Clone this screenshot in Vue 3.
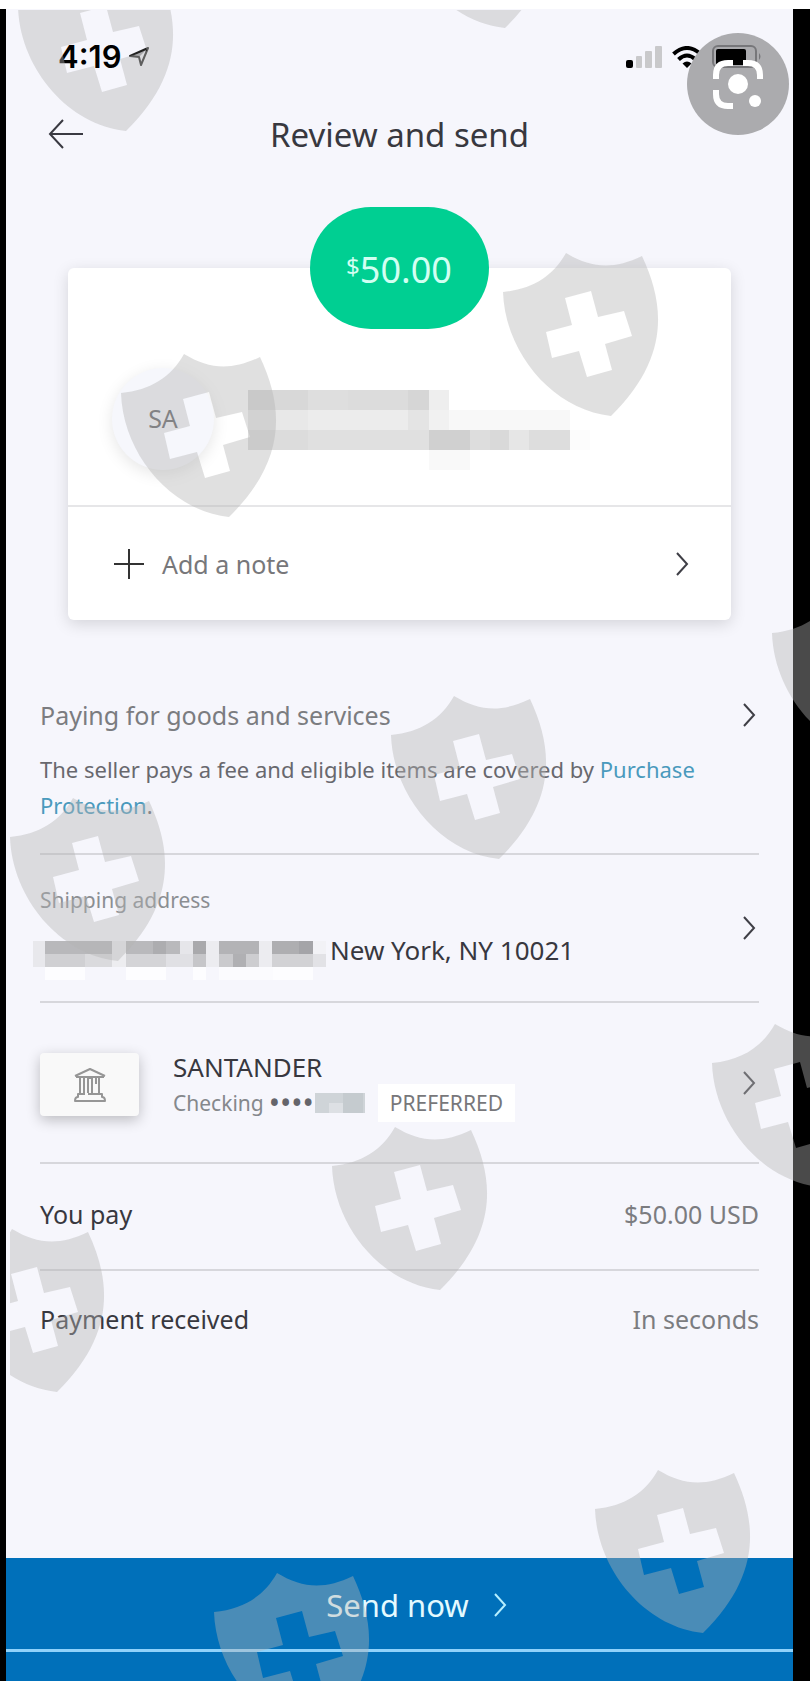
<script setup>
const shields = [
  [18, -32], [397, -135], [503, 253], [121, 354], [772, 594], [391, 696],
  [10, 798], [712, 1024], [332, 1127], [-51, 1229], [595, 1470], [214, 1573]
]

// Blocks hiding the recipient's name: x, y, width, height, colour
const nameBlocks = [
  [0, 0, 60, 20, '#d8d8d8'], [60, 0, 40, 20, '#dedede'], [100, 0, 60, 20, '#dcdcdc'], [160, 0, 21, 20, '#d6d6d6'], [181, 0, 20, 20, '#eeeeee'],
  [0, 20, 60, 20, '#e8e8e8'], [60, 20, 100, 20, '#ececec'], [160, 20, 21, 20, '#e4e4e4'], [181, 20, 20, 20, '#f1f1f1'], [201, 20, 121, 20, '#f8f8f8'],
  [0, 40, 60, 20, '#dcdcdc'], [60, 40, 121, 20, '#e0e0e0'], [181, 40, 41, 20, '#d0d0d0'], [222, 40, 20, 20, '#dddddd'], [242, 40, 19, 20, '#d9d9d9'], [261, 40, 20, 20, '#e6e6e6'], [281, 40, 41, 20, '#dddddd'],
  [181, 60, 41, 20, '#f9f9f9'], [322, 40, 20, 20, '#fcfcfc']
]

const addressBlocks = [
  [0, 0, 12, 26, '#e8e8ec'], [12, 0, 67, 13, '#b8b8bb'], [12, 13, 40, 13, '#d0d0d3'], [52, 13, 27, 13, '#dadadd'],
  [79, 0, 14, 26, '#ededf0'], [93, 0, 54, 13, '#b9b9bc'], [120, 0, 13, 13, '#adadb0'], [93, 13, 40, 13, '#d4d4d7'], [133, 13, 27, 13, '#e0e0e4'],
  [147, 0, 13, 13, '#e6e6ea'], [160, 0, 13, 13, '#a9a9ac'], [160, 13, 13, 13, '#c6c6c9'], [173, 0, 13, 26, '#ececf0'],
  [186, 0, 40, 13, '#b3b3b6'], [186, 13, 14, 13, '#cacacd'], [200, 13, 13, 13, '#b0b0b3'], [213, 13, 13, 13, '#cdcdd0'],
  [226, 0, 13, 26, '#ececf0'], [239, 0, 27, 13, '#aeaeb1'], [266, 0, 14, 13, '#a4a4a8'], [239, 13, 41, 13, '#d2d2d5'], [280, 13, 13, 13, '#e2e2e6'], [280, 0, 13, 13, '#f2f2f6'],
  [12, 26, 40, 13, '#fdfdff'], [93, 26, 40, 13, '#fdfdff'], [160, 26, 13, 13, '#fdfdff'], [186, 26, 54, 13, '#fbfbfe'], [240, 26, 40, 13, '#fdfdff']
]
</script>

<template>
  <div class="device">
    <main class="screen">
      <div class="status">
        <span class="clock">4:19</span>
        <svg class="locate" width="20" height="20" viewBox="0 0 20 20" fill="none" stroke="#222" stroke-width="2" stroke-linejoin="round">
          <path d="M1 9 19 1 12 18 10 10Z" />
          <path d="M1 9 19 1 10 10Z" fill="#222" stroke="none" opacity=".4" />
        </svg>
        <svg class="signal" width="36" height="22" viewBox="0 0 36 22">
          <rect x="0" y="14" width="7" height="8" rx="2" fill="#000" />
          <rect x="10" y="10" width="6" height="12" rx="1" fill="#c9c9cb" />
          <rect x="19" y="5" width="7" height="17" rx="1" fill="#c9c9cb" />
          <rect x="29" y="0" width="7" height="22" rx="1" fill="#c9c9cb" />
        </svg>
        <svg class="wifi" width="30" height="22" viewBox="0 0 30 22" fill="none" stroke="#000" stroke-width="4">
          <path d="M1.500 8Q15 -4 28.500 8M6.500 13.500Q15 5.500 23.500 13.500" />
          <path d="M10.500 17.500Q15 13.500 19.500 17.500L15 22Z" fill="#000" stroke="none" />
        </svg>
        <svg class="battery" width="50" height="24" viewBox="0 0 50 24">
          <rect x="1" y="1" width="43" height="21" rx="5" fill="none" stroke="#77777a" stroke-width="2" />
          <rect x="4" y="4" width="30" height="16" rx="2" fill="#000" />
          <path d="M47 8q3 3.500 0 7z" fill="#77777a" />
        </svg>
        <span class="lens disc"></span>
        <button class="lens" aria-label="Search image">
          <svg width="102" height="102" viewBox="0 0 102 102">
            <g fill="none" stroke="#fff" stroke-width="6">
              <path d="M29 46V42Q29 30 41 30H46M56 30H61Q73 30 73 42V46M29 57V61Q29 73 41 73H46" />
            </g>
            <circle cx="51" cy="51" r="10" fill="#fff" />
            <circle cx="68" cy="68" r="6" fill="#fff" />
          </svg>
        </button>
      </div>

      <header class="header">
        <button class="back" aria-label="Back">
          <svg width="36" height="30" viewBox="0 0 36 30" fill="none" stroke="#3a3a42" stroke-width="2">
            <path d="M35 15H2M15 1 2 15 15 29" />
          </svg>
        </button>
        <h1>Review and send</h1>
      </header>

      <section class="card">
        <div class="amount"><span class="currency">$</span>50.00</div>
        <div class="recipient">
          <div class="avatar">SA</div>
          <svg class="name" width="342" height="80" viewBox="0 0 342 80" aria-hidden="true">
            <rect v-for="(b, i) in nameBlocks" :key="i" :x="b[0]" :y="b[1]" :width="b[2]" :height="b[3]" :fill="b[4]" />
          </svg>
        </div>
        <button class="note">
          <svg width="30" height="30" viewBox="0 0 30 30" stroke="#333" stroke-width="2"><path d="M0 15H30M15 0V30" /></svg>
          <span>Add a note</span>
          <svg class="chevron" width="14" height="24" viewBox="0 0 14 24"><path d="M2 1 12 12 2 23" /></svg>
        </button>
      </section>

      <div class="details">
        <section class="row purpose">
          <div class="purpose-head">
            <h2>Paying for goods and services</h2>
            <svg class="chevron" width="14" height="24" viewBox="0 0 14 24"><path d="M2 1 12 12 2 23" /></svg>
          </div>
          <p>The seller pays a fee and eligible items are covered by <a href="#">Purchase Protection</a>.</p>
        </section>

        <section class="row shipping">
          <div>
            <h3>Shipping address</h3>
            <div class="address">
              <svg class="street" width="293" height="39" viewBox="0 0 293 39" aria-hidden="true">
                <rect v-for="(b, i) in addressBlocks" :key="i" :x="b[0]" :y="b[1]" :width="b[2]" :height="b[3]" :fill="b[4]" />
              </svg>
              <span>New York, NY 10021</span>
            </div>
          </div>
          <svg class="chevron" width="14" height="24" viewBox="0 0 14 24"><path d="M2 1 12 12 2 23" /></svg>
        </section>

        <section class="row bank">
          <div class="tile">
            <svg width="32" height="34" viewBox="0 0 32 34" fill="none" stroke="#969696" stroke-width="2" stroke-linejoin="round">
              <path d="M1 8 16 1 31 8M2 9H30M6 10V25M10 10V25M14 25V10H18V25M25 10V25M22 10V16" />
              <path d="M11 26H4V29Q1 29 1 33H31Q31 29 28 29V26H14" />
            </svg>
          </div>
          <div class="account">
            <div class="bank-name">SANTANDER</div>
            <div class="number">
              <span>Checking</span>
              <span class="dots">••••</span>
              <svg width="50" height="20" viewBox="0 0 50 20" aria-hidden="true">
                <rect width="50" height="20" fill="#cfd4d8" />
                <rect x="14" y="10" width="14" height="10" fill="#dde0e4" />
                <rect x="28" width="20" height="20" fill="#c5cbcf" />
              </svg>
              <span class="badge">PREFERRED</span>
            </div>
          </div>
          <svg class="chevron" width="14" height="24" viewBox="0 0 14 24"><path d="M2 1 12 12 2 23" /></svg>
        </section>

        <section class="row total"><span>You pay</span><span class="value">$50.00 USD</span></section>
        <section class="row total last"><span>Payment received</span><span class="value">In seconds</span></section>
      </div>

      <footer class="footer">
        <button class="send">
          <span>Send now</span>
          <svg width="14" height="24" viewBox="0 0 14 24" fill="none" stroke="#b5efff" stroke-width="2"><path d="M2 1 12 12 2 23" /></svg>
        </button>
      </footer>
    </main>

    <div class="watermark">
      <svg width="100%" height="100%" aria-hidden="true">
        <g transform="translate(-10 -10)" fill="#b3b3b3" fill-opacity=".41" fill-rule="evenodd">
          <path
            v-for="(s, i) in shields" :key="i" :transform="`translate(${s[0]} ${s[1]})`"
            d="M0 39C30 36 50 23 63 0C88 15 110 17 139 3C162 52 167 105 108 163C50 157 2 100 0 39ZM62 45 69 72 43 79 49 105 76 98 84 124 109 117 102 91 129 83 121 58 95 64 88 38Z"
          />
        </g>
      </svg>
    </div>
  </div>
</template>

<style>
body { margin: 0; background: #000; }
</style>

<style scoped>
* { box-sizing: border-box; }
button { border: 0; padding: 0; background: none; font: inherit; color: inherit; }
h1, h2, h3, p { margin: 0; font-weight: 400; }
svg { display: block; flex: none; }

.device {
  position: relative;
  display: flex;
  min-height: 100vh;
  padding: 0 17px 0 6px;
  border-top: 9px solid #fff;
  background: #000;
  font-family: "Noto Sans", sans-serif;
  font-size: 25px;
  line-height: 34px;
  color: #38383f;
}
.screen { flex: 1; display: flex; flex-direction: column; background: #f6f6fc; }

.status { position: relative; display: flex; align-items: center; height: 96px; padding: 0 31px 0 52px; }
.clock { font-family: Inter, sans-serif; font-weight: 600; font-size: 31px; color: #000; }
.locate { margin-left: 8px; }
.signal { margin-left: auto; margin-right: 10px; }
.wifi { margin-right: 10px; }
.battery { position: relative; z-index: 1; }
.lens { position: absolute; top: 24px; right: 4px; width: 102px; height: 102px; border-radius: 50%; z-index: 2; }
.disc { background: #ababae; z-index: 0; }

.header { position: relative; display: flex; align-items: center; justify-content: center; height: 60px; }
.back { position: absolute; left: 42px; top: 14px; }
h1 { font-size: 33px; line-height: 44px; }

.card {
  position: relative;
  margin: 103px 62px 0;
  border-radius: 6px;
  background: #fff;
  box-shadow: 0 4px 16px rgba(0, 0, 0, .14);
}
.amount {
  position: absolute;
  top: -61px;
  left: 50%;
  width: 179px;
  height: 122px;
  margin-left: -90px;
  border-radius: 61px;
  background: #00cf92;
  color: #d2fff2;
  font-size: 36px;
  line-height: 126px;
  text-align: center;
}
.currency { font-size: 24px; vertical-align: 8px; line-height: 1; }
.recipient { display: flex; gap: 34px; padding: 100px 44px 35px; border-bottom: 2px solid #e6e6e8; }
.avatar {
  flex: none;
  width: 102px;
  height: 102px;
  border-radius: 50%;
  background: #f6f7fc;
  box-shadow: 0 4px 16px rgba(0, 0, 0, .1);
  line-height: 100px;
  text-align: center;
  color: #606064;
}
.name { margin-top: 22px; }
.note { display: flex; align-items: center; width: 100%; height: 113px; padding: 0 42px 0 46px; color: #77777a; }
.note span { margin-left: 18px; }
.chevron { margin-left: auto; fill: none; stroke: #3f3f46; stroke-width: 2; }

.details { padding: 78px 34px 0; }
.row { border-bottom: 2px solid #d7d7dc; }
.purpose { padding-bottom: 30px; }
.purpose-head { display: flex; align-items: center; color: #7b7c80; padding-right: 3px; }
h2 { font-size: 25px; line-height: 34px; }
p { margin-top: 19px; font-size: 22px; line-height: 36px; color: #68686e; }
a { color: #4a9abd; text-decoration: none; }
.shipping { display: flex; align-items: center; padding: 30px 3px 34px 0; }
.shipping .chevron { margin-top: 4px; }
h3 { font-size: 21px; line-height: 30px; color: #8b8e92; }
.address { display: flex; align-items: center; height: 34px; margin: 18px 0 0 -7px; gap: 4px; font-size: 26px; }
.street { margin-top: 20px; }
.bank { display: flex; align-items: center; height: 161px; padding-right: 3px; }
.tile {
  display: flex;
  align-items: center;
  justify-content: center;
  width: 99px;
  height: 63px;
  margin-top: 4px;
  border-radius: 4px;
  background: #f9f9f9;
  box-shadow: 0 4px 14px rgba(0, 0, 0, .24);
}
.account { margin-left: 34px; padding-top: 6px; }
.bank-name { font-size: 26px; }
.number { display: flex; align-items: center; font-size: 21px; color: #85888c; }
.dots { margin: 0 1px 0 5px; font-size: 30px; color: #65656b; }
.badge { margin-left: 13px; padding: 0 12px; background: #fff; line-height: 38px; color: #77777a; }
.total { display: flex; align-items: center; justify-content: space-between; height: 107px; padding-bottom: 6px; }
.value { color: #7b7c80; }
.last { border: 0; height: 98px; padding-bottom: 2px; }

.footer { margin-top: auto; padding-bottom: 29px; background: #0070ba; }
.send {
  display: flex;
  align-items: center;
  justify-content: center;
  gap: 24px;
  width: 100%;
  height: 94px;
  padding: 2px 0 0 34px;
  border-bottom: 3px solid #8fd2fb;
  font-size: 31px;
  color: #e4faff;
}

.watermark { position: absolute; top: 1px; right: 0; bottom: 0; left: 10px; overflow: hidden; pointer-events: none; }
</style>
